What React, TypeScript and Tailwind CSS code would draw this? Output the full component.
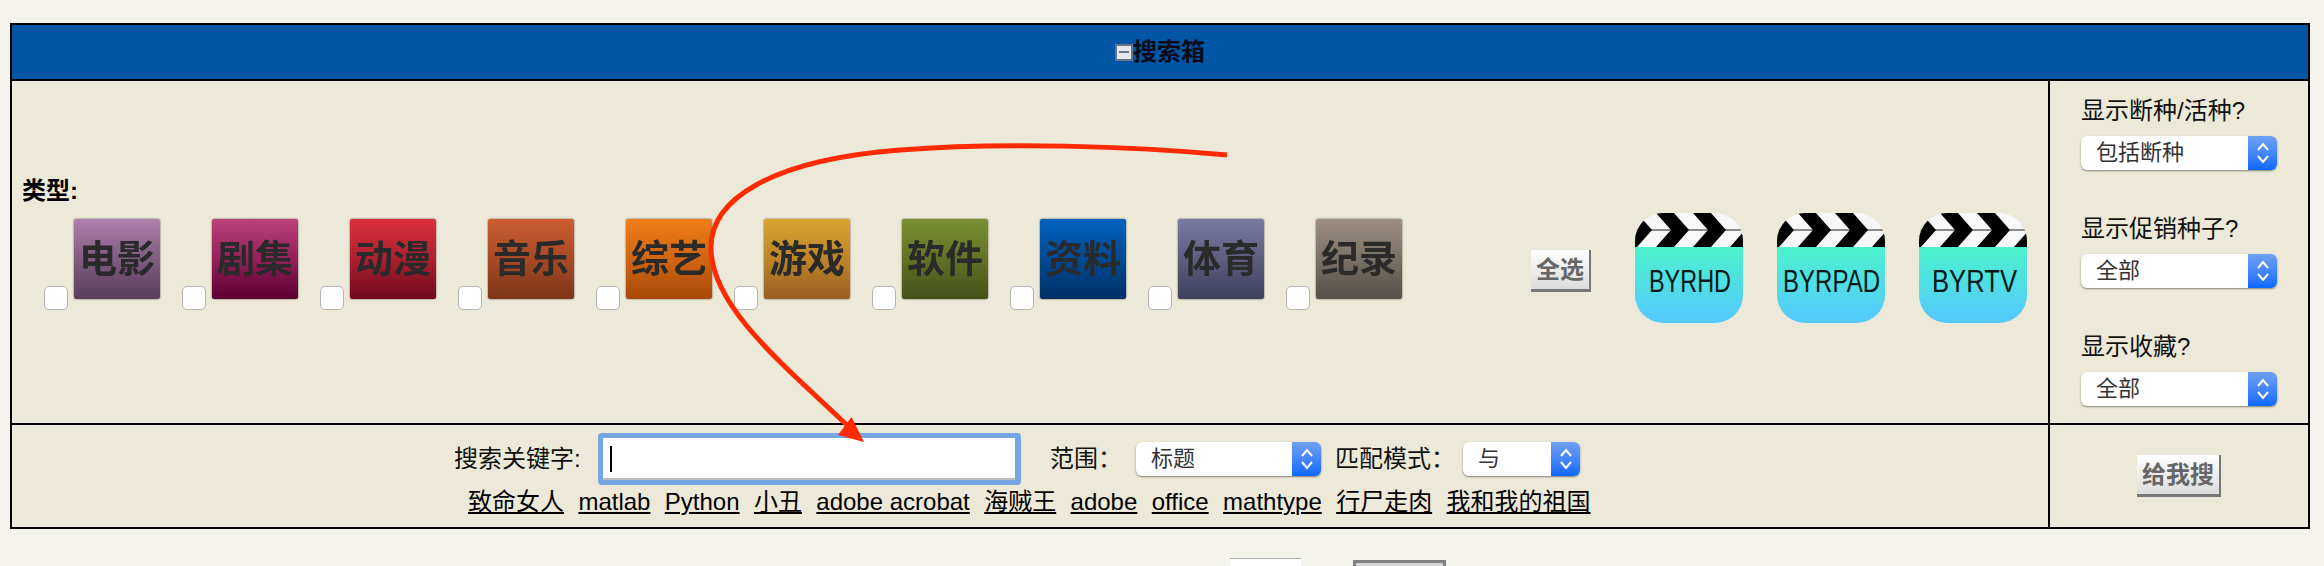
import React from "react";

const cats: [string, string][] = [
  ["电影", "bg-gradient-to-b from-[#b07fae] via-[#7f5c80] to-[#5a3f5d]"],
  ["剧集", "bg-gradient-to-b from-[#bb4078] via-[#95205a] to-[#5c0030]"],
  ["动漫", "bg-gradient-to-b from-[#dc2f3d] via-[#ad2030] to-[#6e0a1c]"],
  ["音乐", "bg-gradient-to-b from-[#cc5c30] via-[#a84a26] to-[#7d3518]"],
  ["综艺", "bg-gradient-to-b from-[#f07d18] via-[#d06610] to-[#a84808]"],
  ["游戏", "bg-gradient-to-b from-[#d8a431] via-[#bd8429] to-[#9a5f22]"],
  ["软件", "bg-gradient-to-b from-[#7a9030] via-[#627225] to-[#45501a]"],
  ["资料", "bg-gradient-to-b from-[#0062c0] via-[#004a94] to-[#002f66]"],
  ["体育", "bg-gradient-to-b from-[#787aa0] via-[#5d5e80] to-[#3f3f5e]"],
  ["纪录", "bg-gradient-to-b from-[#9a8f80] via-[#7a7166] to-[#55504a]"],
];

const links = ["致命女人", "matlab", "Python", "小丑", "adobe acrobat", "海贼王", "adobe", "office", "mathtype", "行尸走肉", "我和我的祖国"];

function Chevrons() {
  return (
    <svg width="14" height="24" viewBox="0 0 14 24" fill="none" stroke="white" strokeWidth="2">
      <path d="M2 9 L7 3 L12 9" />
      <path d="M2 15 L7 21 L12 15" />
    </svg>
  );
}

function Select({ label, w }: { label: string; w: string }) {
  return (
    <div className={`flex h-[34px] ${w} rounded-[6px] bg-white overflow-hidden shadow-[0_1px_2px_rgba(0,0,0,0.45)]`}>
      <div className="flex-1 pl-[15px] text-[22px] leading-[33px] text-[#333]">{label}</div>
      <div className="w-[29px] flex items-center justify-center bg-gradient-to-b from-[#6fa0f2] to-[#0768ff]">
        <Chevrons />
      </div>
    </div>
  );
}

function Clapper({ id, label, x, w }: { id: string; label: string; x: number; w: number }) {
  const chev = (a: number) => `${a},0 ${a + 18},0 ${a + 33},17 ${a + 18},34 ${a},34 ${a + 15},17`;
  return (
    <svg width="108" height="110" viewBox="0 0 108 110" className="block">
      <defs>
        <linearGradient id={id} x1="0" y1="0" x2="0" y2="1">
          <stop offset="0" stopColor="#4cf2cc" />
          <stop offset="1" stopColor="#54c8ff" />
        </linearGradient>
        <clipPath id={`${id}c`}>
          <rect width="108" height="110" rx="28" ry="28" />
        </clipPath>
      </defs>
      <g clipPath={`url(#${id}c)`}>
        <rect width="108" height="34" fill="#f8f8f8" />
        <rect y="16" width="108" height="2" fill="#8a8a8a" />
        {[-16, 21, 58, 95].map((a) => (
          <polygon key={a} points={chev(a)} fill="#000" />
        ))}
        <rect y="34" width="108" height="76" fill={`url(#${id})`} />
      </g>
      <text
        transform={`translate(${x} 79) scale(1 1.45)`}
        textLength={w}
        lengthAdjust="spacingAndGlyphs"
        fontFamily="Liberation Sans"
        fontSize="22"
        fill="#061a1a"
      >
        {label}
      </text>
    </svg>
  );
}

function RaisedButton({ label, w }: { label: string; w: string }) {
  return (
    <button className={`${w} h-[42px] bg-gradient-to-b from-white to-[#dcdcdc] border-r-[2px] border-b-[3px] border-[#777] text-[#666] text-[24px] font-bold leading-none`}>
      {label}
    </button>
  );
}

export default function App() {
  return (
    <div className="relative h-[566px] overflow-hidden bg-[#f4f4ec] pt-[23px] pl-[10px] text-black font-['Liberation_Sans','Noto_Sans_CJK_SC',sans-serif]">
      <div className="w-[2300px] border-2 border-black bg-[#ece9d8]">
        <div className="h-[56px] border-b-2 border-black bg-[#0055a4] flex items-center justify-center text-[24px] font-bold text-[#0a0a1a]">
          <span className="w-[18px] h-[17px] bg-[#e6e8ee] border-2 border-[#66738a] flex items-center justify-center">
            <span className="block w-[10px] h-[2px] bg-[#66738a]" />
          </span>
          <span>搜索箱</span>
        </div>

        <div className="flex h-[344px] border-b-2 border-black">
          <div className="w-[2036px] pt-[96px]">
            <div className="pl-[10px] h-[28px] text-[24px] leading-[28px] font-bold">类型:</div>
            <div className="flex h-[91px] mt-[14px] pl-[32px]">
              {cats.map(([name, cls]) => (
                <div key={name} className="flex w-[138px] shrink-0">
                  <span className="self-end w-[24px] h-[24px] mr-[6px] rounded-[5px] bg-white border border-[#b5b5b5]" />
                  <div className={`w-[86px] h-[80px] ${cls} rounded-[2px] shadow-[0_0_2px_rgba(0,0,0,0.65)] flex items-center justify-center text-[38px] font-semibold text-[#2a2a2a] blur-[0.5px] whitespace-nowrap`}>
                    {name}
                  </div>
                </div>
              ))}
              <div className="ml-[107px] mt-[31px] self-start">
                <RaisedButton label="全选" w="w-[60px]" />
              </div>
              <div className="ml-[44px] mt-[-6px] flex self-start gap-[34px]">
                <Clapper id="a" label="BYRHD" x={14} w={82} />
                <Clapper id="b" label="BYRPAD" x={6} w={97} />
                <Clapper id="c" label="BYRTV" x={13} w={85} />
              </div>
            </div>
          </div>
          <div className="w-[260px] border-l-2 border-black pl-[31px] pt-[16px] flex flex-col gap-[45px]">
            {[
              ["显示断种/活种?", "包括断种"],
              ["显示促销种子?", "全部"],
              ["显示收藏?", "全部"],
            ].map(([q, v]) => (
              <div key={q}>
                <div className="h-[28px] text-[24px] leading-[28px] mb-[11px] text-[#111]">{q}</div>
                <Select label={v} w="w-[196px]" />
              </div>
            ))}
          </div>
        </div>

        <div className="flex h-[102px]">
          <div className="w-[2036px]">
            <div className="flex items-center pl-[442px] pt-[8px] text-[24px] leading-[28px] text-[#111]">
              <span className="w-[126px] whitespace-nowrap">搜索关键字:</span>
              <div className="ml-[18px] w-[423px] h-[52px] rounded-[4px] bg-[#76a5e4] p-[5px] pr-[6px]">
                <div className="h-full bg-white border-b-2 border-[#bbb] pl-[7px] pt-[8px]">
                  <div className="w-[2px] h-[26px] bg-black" />
                </div>
              </div>
              <span className="ml-[29px] w-[72px] whitespace-nowrap">范围：</span>
              <div className="ml-[14px]"><Select label="标题" w="w-[185px]" /></div>
              <span className="ml-[14px] w-[120px] whitespace-nowrap">匹配模式：</span>
              <div className="ml-[8px]"><Select label="与" w="w-[117px]" /></div>
            </div>
            <div className="flex pl-[456px] gap-[14.4px] mt-[3px] text-[24px] leading-[28px] whitespace-nowrap">
              {links.map((l, i) => (
                <a key={i} className="underline underline-offset-[2px] decoration-[2px]">{l}</a>
              ))}
            </div>
          </div>
          <div className="w-[260px] border-l-2 border-black flex items-center justify-center">
            <RaisedButton label="给我搜" w="w-[84px]" />
          </div>
        </div>
      </div>

      <div className="flex pl-[1220px] mt-[29px]">
        <div className="w-[71px] h-[30px] bg-white border-t border-[#aaa]" />
        <div className="ml-[52px] mt-[2px] w-[93px] h-[30px] bg-[#d4d4d4] border-[3px] border-[#808080]" />
      </div>

      <svg width="2324" height="566" className="absolute left-0 top-0 pointer-events-none">
        <path
          d="M1227 155 C1130 146 1000 142 900 150 C770 160 709 200 711 250 C713 310 790 370 852 430"
          fill="none"
          stroke="#ff2a00"
          strokeWidth="5"
        />
        <polygon points="864,442 838,435 851.5,417" fill="#ff2a00" />
      </svg>
    </div>
  );
}
